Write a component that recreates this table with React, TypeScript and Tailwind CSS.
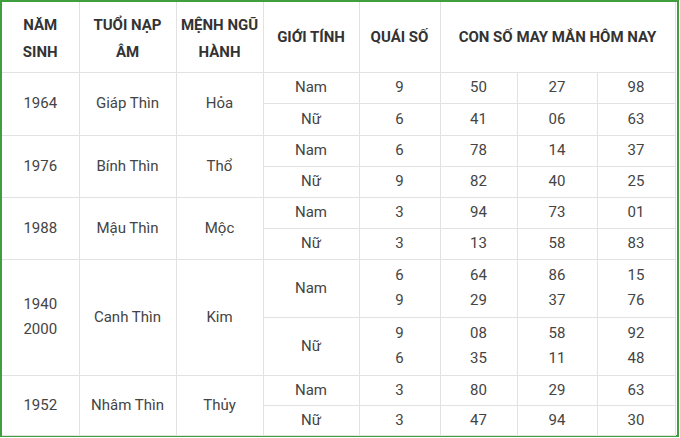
const groups = [
  {
    year: ["1964"],
    tuoi: "Giáp Thìn",
    menh: "Hỏa",
    rows: [
      { gt: "Nam", qs: ["9"], nums: [["50"], ["27"], ["98"]] },
      { gt: "Nữ", qs: ["6"], nums: [["41"], ["06"], ["63"]] },
    ],
  },
  {
    year: ["1976"],
    tuoi: "Bính Thìn",
    menh: "Thổ",
    rows: [
      { gt: "Nam", qs: ["6"], nums: [["78"], ["14"], ["37"]] },
      { gt: "Nữ", qs: ["9"], nums: [["82"], ["40"], ["25"]] },
    ],
  },
  {
    year: ["1988"],
    tuoi: "Mậu Thìn",
    menh: "Mộc",
    rows: [
      { gt: "Nam", qs: ["3"], nums: [["94"], ["73"], ["01"]] },
      { gt: "Nữ", qs: ["3"], nums: [["13"], ["58"], ["83"]] },
    ],
  },
  {
    year: ["1940", "2000"],
    tuoi: "Canh Thìn",
    menh: "Kim",
    rows: [
      { gt: "Nam", qs: ["6", "9"], nums: [["64", "29"], ["86", "37"], ["15", "76"]] },
      { gt: "Nữ", qs: ["9", "6"], nums: [["08", "35"], ["58", "11"], ["92", "48"]] },
    ],
  },
  {
    year: ["1952"],
    tuoi: "Nhâm Thìn",
    menh: "Thủy",
    rows: [
      { gt: "Nam", qs: ["3"], nums: [["80"], ["29"], ["63"]] },
      { gt: "Nữ", qs: ["3"], nums: [["47"], ["94"], ["30"]] },
    ],
  },
];

const rowHeights = [
  [31, 32],
  [31, 31],
  [31, 31],
  [58, 58],
  [30, 30],
];

function Lines({ items }: { items: string[] }) {
  return (
    <>
      {items.map((t, i) => (
        <div key={i} className="leading-[25px]">
          {t}
        </div>
      ))}
    </>
  );
}

const cell = "border border-[#e2e2e2] text-center align-middle";

export default function App() {
  return (
    <div
      className="h-[437px] w-[679px] border-2 border-[#3f9f3f] bg-white pr-[2px]"
      style={{ fontFamily: "Roboto, 'Liberation Sans', sans-serif" }}
    >
      <table className="w-[673px] table-fixed border-collapse text-[15px] text-[#444]">
        <colgroup>
          <col className="w-[77px]" />
          <col className="w-[97px]" />
          <col className="w-[87px]" />
          <col className="w-[96px]" />
          <col className="w-[81px]" />
          <col className="w-[77px]" />
          <col className="w-[80px]" />
          <col className="w-[78px]" />
        </colgroup>
        <thead>
          <tr className="h-[70px] font-bold text-[#333]">
            <th className={`${cell} border-t-0 border-l-0 pt-1 leading-[27px]`}>
              NĂM
              <br />
              SINH
            </th>
            <th className={`${cell} border-t-0 pt-1 leading-[27px]`}>
              TUỔI NẠP
              <br />
              ÂM
            </th>
            <th className={`${cell} border-t-0 pt-1 leading-[27px]`}>
              MỆNH NGŨ
              <br />
              HÀNH
            </th>
            <th className={`${cell} border-t-0`}>GIỚI TÍNH</th>
            <th className={`${cell} border-t-0`}>QUÁI SỐ</th>
            <th colSpan={3} className={`${cell} border-t-0`}>
              CON SỐ MAY MẮN HÔM NAY
            </th>
          </tr>
        </thead>
        <tbody>
          {groups.map((g, gi) =>
            g.rows.map((r, ri) => (
              <tr key={`${gi}-${ri}`} style={{ height: rowHeights[gi][ri] }}>
                {ri === 0 && (
                  <>
                    <td rowSpan={2} className={`${cell} border-l-0`}>
                      <Lines items={g.year} />
                    </td>
                    <td rowSpan={2} className={cell}>
                      {g.tuoi}
                    </td>
                    <td rowSpan={2} className={cell}>
                      {g.menh}
                    </td>
                  </>
                )}
                <td className={cell}>{r.gt}</td>
                <td className={cell}>
                  <Lines items={r.qs} />
                </td>
                {r.nums.map((n, ni) => (
                  <td key={ni} className={cell}>
                    <Lines items={n} />
                  </td>
                ))}
              </tr>
            ))
          )}
        </tbody>
      </table>
    </div>
  );
}
